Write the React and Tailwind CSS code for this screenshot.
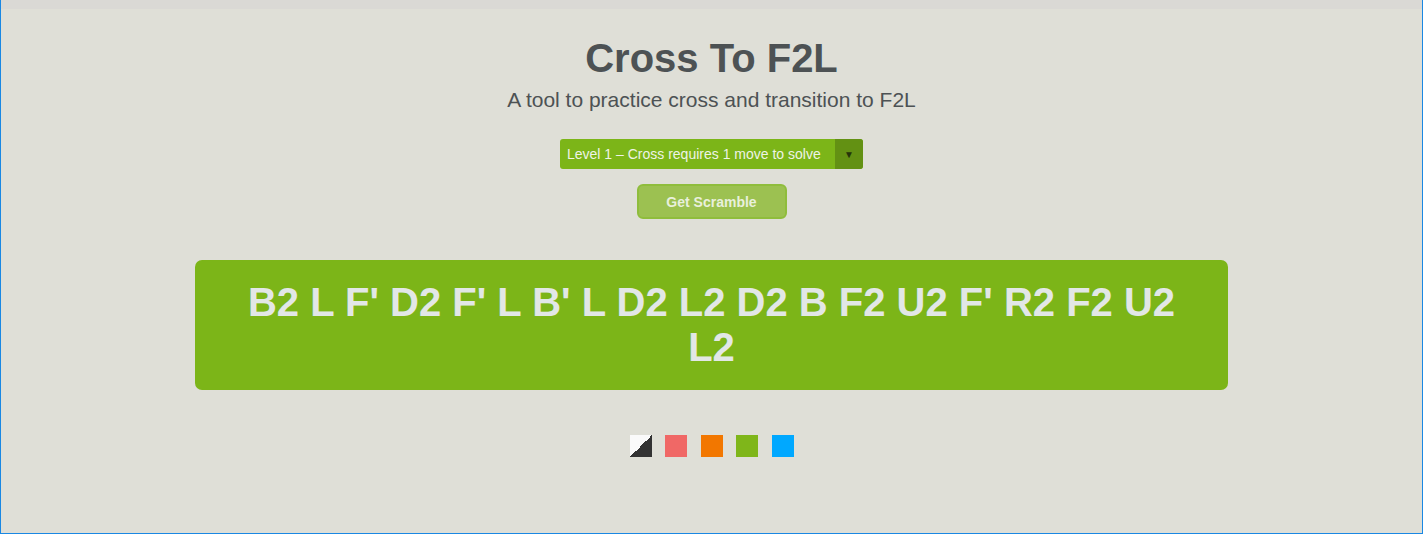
export default function App() {
  const colors = ["bg-[#f06866]", "bg-[#f27700]", "bg-[#7fb61a]", "bg-[#00a8ff]"];

  return (
    <div className="min-h-[534px] bg-[#dfdfd7] border-x border-b border-[#1a88e3] font-['Liberation_Sans',Arial,sans-serif]">
      <div className="h-[9px] bg-[#dad9d5]" />
      <div className="flex flex-col items-center">
        <h1 className="mt-[26px] text-[40px] leading-[46px] font-bold text-[#4d5254]">Cross To F2L</h1>
        <p className="mt-[6px] text-[21px] leading-[26px] text-[#4d5254]">
          A tool to practice cross and transition to F2L
        </p>

        {/* level select */}
        <div className="mt-[26px] flex h-[30px] w-[303px] overflow-hidden rounded-[3px] bg-[#7cb518]">
          <div className="flex-1 pl-[7px] text-[14px] leading-[30px] text-[#eef3e6]">
            Level 1 – Cross requires 1 move to solve
          </div>
          <div className="flex w-[28px] items-center justify-center bg-[#639113] text-[10px] text-[#26340a]">▼</div>
        </div>

        <button className="mt-[15px] h-[35px] w-[150px] rounded-[6px] border-[2px] border-[#8fbd3c] bg-[#9cc151] pt-[1px] text-[14px] font-bold text-[#e9f0dc]">
          Get Scramble
        </button>

        {/* scramble */}
        <div className="mt-[41px] w-[1033px] rounded-[7px] bg-[#7cb518] px-[40px] py-[20px] text-center text-[40px] font-bold leading-[45px] text-[#e2e7e6]">
          B2 L F' D2 F' L B' L D2 L2 D2 B F2 U2 F' R2 F2 U2 L2
        </div>

        {/* colour picker */}
        <div className="mt-[45px] flex gap-[13.5px]">
          <div className="h-[22px] w-[22px] bg-[linear-gradient(to_bottom_right,#fafafa_50%,#333_50%)]" />
          {colors.map((c) => (
            <div key={c} className={`h-[22px] w-[22px] ${c}`} />
          ))}
        </div>
      </div>
    </div>
  );
}
